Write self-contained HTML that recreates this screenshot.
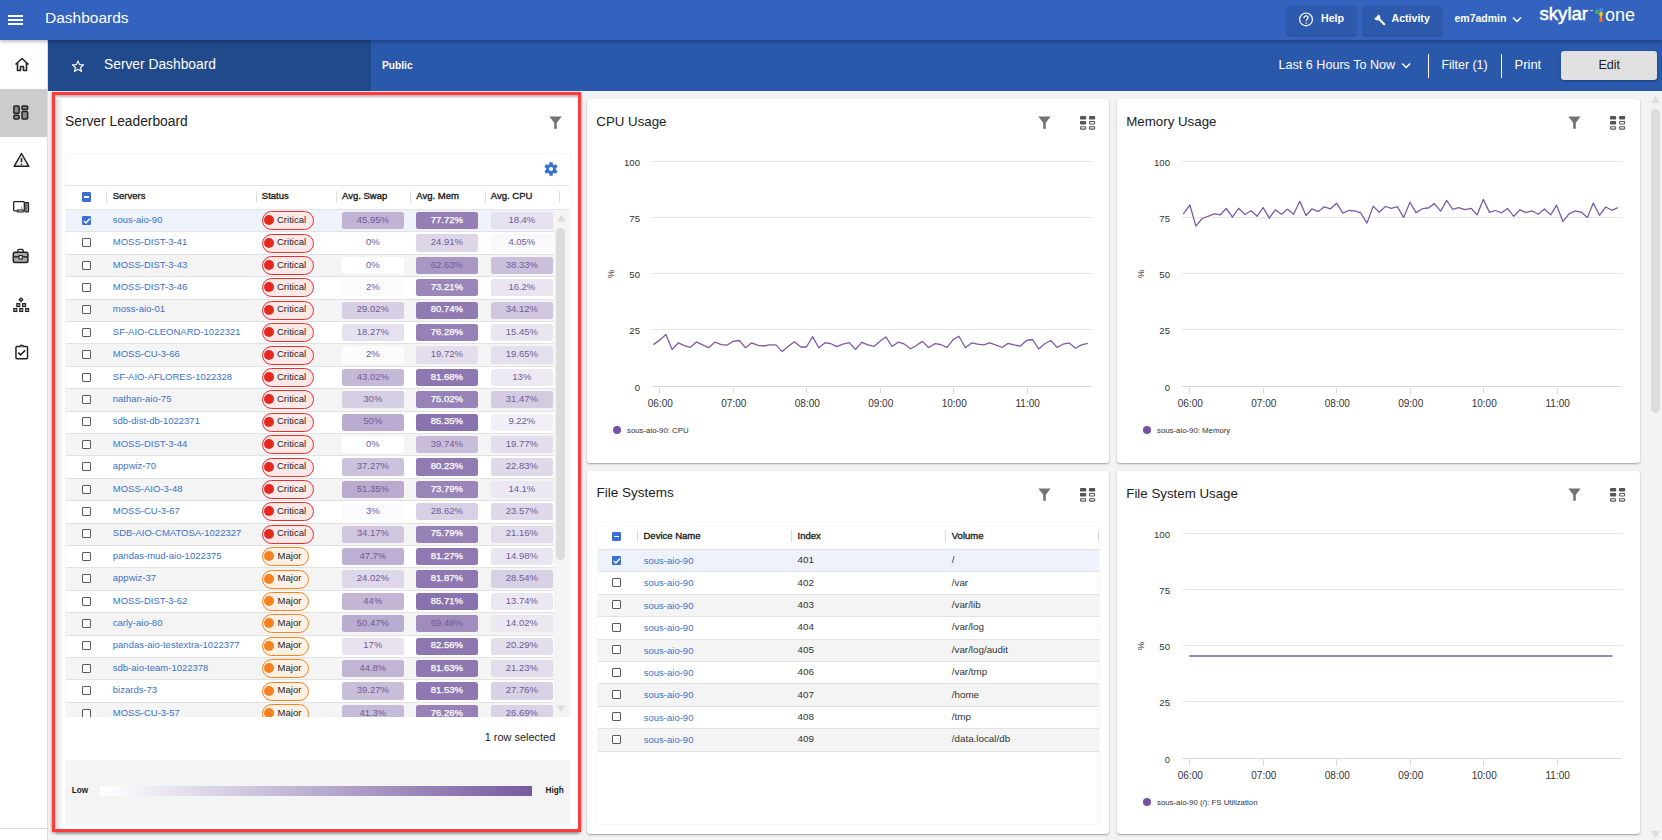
<!DOCTYPE html>
<html><head><meta charset="utf-8"><style>
*{box-sizing:content-box}
html,body{margin:0;padding:0}
body{width:1662px;height:840px;overflow:hidden;position:relative;background:#f3f3f3;font-family:"Liberation Sans", sans-serif;color:#222}
.a{position:absolute}
.t{position:absolute;white-space:nowrap;line-height:1}
.card{position:absolute;background:#fff;border-radius:3px;box-shadow:0 1px 2px rgba(0,0,0,0.35)}
</style></head><body>

<div class="a" style="left:0;top:0;width:1662px;height:40px;background:#3363be;z-index:5;box-shadow:0 1px 4px rgba(0,0,0,0.35)">
<div class="a" style="left:8px;top:14.5px;width:15px;height:2px;background:#fff"></div>
<div class="a" style="left:8px;top:18.8px;width:15px;height:2px;background:#fff"></div>
<div class="a" style="left:8px;top:23px;width:15px;height:2px;background:#fff"></div>
<div class="t" style="left:45px;top:9.78px;font-size:15.5px;color:#fff;">Dashboards</div>
<div class="a" style="left:1286.5px;top:5.5px;width:69px;height:29px;background:#2d5aad;border-radius:3px;box-shadow:0 1px 2px rgba(0,0,0,0.3)"></div>
<svg class="a" style="left:1298px;top:12px" width="16" height="16" viewBox="0 0 16 16"><circle cx="8" cy="7.4" r="6.4" fill="none" stroke="#fff" stroke-width="1.2"/><path d="M6 5.9 C6 4.6 7 3.9 8 3.9 C9.1 3.9 10 4.6 10 5.7 C10 7.1 8.2 7.2 8.2 9" fill="none" stroke="#fff" stroke-width="1.2"/><circle cx="8.2" cy="10.9" r="0.75" fill="#fff"/></svg>
<div class="t" style="left:1321px;top:13.23px;font-size:10.6px;color:#fff;font-weight:bold;">Help</div>
<div class="a" style="left:1363px;top:5.5px;width:78.5px;height:29px;background:#2d5aad;border-radius:3px;box-shadow:0 1px 2px rgba(0,0,0,0.3)"></div>
<svg class="a" style="left:1373.5px;top:14px" width="12" height="12" viewBox="0 0 12 12"><line x1="4" y1="4" x2="10.2" y2="10.2" stroke="#fff" stroke-width="2.2" stroke-linecap="round"/><circle cx="3.4" cy="3.4" r="2.9" fill="#fff"/><path d="M-0.5 2.6 L2.6 -0.5 L4.2 1.1 L1.1 4.2 Z" fill="#2d5aad"/></svg>
<div class="t" style="left:1391.5px;top:13.23px;font-size:10.6px;color:#fff;font-weight:bold;">Activity</div>
<div class="t" style="left:1454.5px;top:12.71px;font-size:10.5px;color:#fff;font-weight:bold;">em7admin</div>
<svg class="a" style="left:1512px;top:16px" width="10" height="8" viewBox="0 0 10 8"><path d="M1 1.5 L5 5.5 L9 1.5" fill="none" stroke="#fff" stroke-width="1.5"/></svg>
<div class="t" style="left:1539.5px;top:5.16px;font-size:18.6px;color:#fff;-webkit-text-stroke:0.5px #fff">skylar</div>
<div class="t" style="left:1605px;top:5.66px;font-size:18px;color:#fff;">one</div>
<div class="a" style="left:1590px;top:10.2px;width:3px;height:0.8px;background:#c9d3ea"></div>
<div class="a" style="left:1600.2px;top:10px;width:1.4px;height:10px;background:#d9a040"></div>
<div class="a" style="left:1594.8px;top:10.1px;width:4px;height:4px;border-radius:50%;background:#4cb944"></div>
<div class="a" style="left:1598.9px;top:7.7px;width:4px;height:4px;border-radius:50%;background:#3a8ef2"></div>
<div class="a" style="left:1598.9px;top:12.35px;width:4px;height:4px;border-radius:50%;background:#fbbf24"></div>
<div class="a" style="left:1598.9px;top:17.6px;width:4px;height:4px;border-radius:50%;background:#f47320"></div>
</div>
<div class="a" style="left:0;top:40px;width:47px;height:800px;background:#fff;border-right:1px solid #ddd;z-index:2"></div>
<div class="a" style="left:0;top:89px;width:47px;height:48px;background:#cccccc;z-index:3"></div>
<div class="a" style="left:0;top:828px;width:47px;height:1px;background:#ddd;z-index:3"></div>
<svg class="a" style="left:14px;top:57px;z-index:4" width="16" height="15" viewBox="0 0 16 15"><path d="M1.5 7.5 L8 1.5 L14.5 7.5 M3.5 5.8 V13.5 H6.5 V9.5 H9.5 V13.5 H12.5 V5.8" fill="none" stroke="#222" stroke-width="1.6" stroke-linejoin="round"/></svg>
<svg class="a" style="left:12.5px;top:104.5px;z-index:4" width="16" height="15" viewBox="0 0 16 15"><rect x="0.9" y="0.9" width="5.2" height="7.4" rx="0.8" fill="#8a8a8a" stroke="#222" stroke-width="1.5"/><rect x="9" y="0.9" width="5.6" height="3.6" rx="0.8" fill="#8a8a8a" stroke="#222" stroke-width="1.5"/><rect x="0.9" y="10.3" width="5.2" height="3.6" rx="0.8" fill="#8a8a8a" stroke="#222" stroke-width="1.5"/><rect x="9" y="6.5" width="5.6" height="7.4" rx="0.8" fill="#8a8a8a" stroke="#222" stroke-width="1.5"/></svg>
<svg class="a" style="left:13px;top:152px;z-index:4" width="17" height="16" viewBox="0 0 17 16"><path d="M8.5 1.5 L15.8 14.3 H1.2 Z" fill="#eee" stroke="#222" stroke-width="1.5" stroke-linejoin="round"/><path d="M8.5 6 V10.2" stroke="#222" stroke-width="1.5"/><circle cx="8.5" cy="12.2" r="0.8" fill="#222"/></svg>
<svg class="a" style="left:12px;top:200px;z-index:4" width="18" height="14" viewBox="0 0 18 14"><rect x="1.65" y="1.65" width="10.7" height="9.2" rx="1" fill="#fff" stroke="#222" stroke-width="1.3"/><rect x="12.8" y="2.6" width="3.8" height="9.3" rx="0.6" fill="#9a9a9a" stroke="#222" stroke-width="1.1"/><path d="M13.8 5 H15.6 M13.8 7 H15.6 M13.8 9 H15.6" stroke="#333" stroke-width="0.8"/><rect x="5.3" y="9.9" width="6" height="2.2" fill="#9a9a9a" stroke="#222" stroke-width="0.8"/><path d="M9.5 6.5 L10 9.5" stroke="#777" stroke-width="0.8"/></svg>
<svg class="a" style="left:12px;top:248px;z-index:4" width="18" height="16" viewBox="0 0 18 16"><path d="M5.8 4.3 V2.6 Q5.8 1.4 7 1.4 H10 Q11.2 1.4 11.2 2.6 V4.3" fill="none" stroke="#222" stroke-width="1.4"/><rect x="1.3" y="4.3" width="14.6" height="10.2" rx="1.6" fill="#a8a8a8" stroke="#222" stroke-width="1.5"/><path d="M1.3 8.8 H15.9" stroke="#222" stroke-width="1.4"/><rect x="7.1" y="7.6" width="3.2" height="3.4" fill="#fff" stroke="#222" stroke-width="1.1"/></svg>
<svg class="a" style="left:12px;top:296px;z-index:4" width="18" height="17" viewBox="0 0 18 17"><path d="M9 1.8 L10.9 3.7 L9 5.6 L7.1 3.7 Z" fill="#9a9a9a" stroke="#222" stroke-width="1.1"/><rect x="4.8" y="7.6" width="3" height="3" fill="#9a9a9a" stroke="#222" stroke-width="1.1"/><rect x="10.6" y="7.6" width="3" height="3" fill="#9a9a9a" stroke="#222" stroke-width="1.1"/><rect x="1.8" y="12.5" width="3" height="3" fill="#9a9a9a" stroke="#222" stroke-width="1.1"/><rect x="7.7" y="12.5" width="3" height="3" fill="#9a9a9a" stroke="#222" stroke-width="1.1"/><rect x="13.6" y="12.5" width="3" height="3" fill="#9a9a9a" stroke="#222" stroke-width="1.1"/></svg>
<svg class="a" style="left:14px;top:343px;z-index:4" width="16" height="17" viewBox="0 0 16 17"><rect x="1.95" y="3.4" width="11.6" height="12.3" rx="1.1" fill="#fff" stroke="#222" stroke-width="1.5"/><path d="M5.8 3.4 Q7.75 0.9 9.7 3.4" fill="#fff" stroke="#222" stroke-width="1.2"/><path d="M4.3 9.6 L6.6 11.9 L11.2 7.2" fill="none" stroke="#222" stroke-width="1.6"/></svg>
<div class="a" style="left:48px;top:40px;width:1614px;height:51px;background:#2a58ab;z-index:1"></div>
<div class="a" style="left:48px;top:40px;width:323px;height:51px;background:#214a8c;z-index:1"></div>
<svg class="a" style="left:71px;top:59.5px;z-index:2" width="14" height="13" viewBox="0 0 14 13"><path d="M7 0.9 L8.55 4.6 L12.6 4.9 L9.5 7.5 L10.5 11.5 L7 9.3 L3.5 11.5 L4.5 7.5 L1.4 4.9 L5.45 4.6 Z" fill="none" stroke="#fff" stroke-width="1.1" stroke-linejoin="round"/></svg>
<div class="t" style="left:104px;top:58.32px;font-size:13.8px;color:#fff;z-index:2;">Server Dashboard</div>
<div class="t" style="left:382px;top:61.27px;font-size:10.2px;color:#fff;font-weight:bold;z-index:2;">Public</div>
<div class="t" style="left:1278.5px;top:58.63px;font-size:12.6px;color:#fff;z-index:2;">Last 6 Hours To Now</div>
<svg class="a" style="left:1400.5px;top:61.5px;z-index:2" width="11" height="8" viewBox="0 0 11 8"><path d="M1.2 1.5 L5.2 5.5 L9.2 1.5" fill="none" stroke="#fff" stroke-width="1.5"/></svg>
<div class="a" style="left:1428px;top:54px;width:1px;height:24px;background:#fff;z-index:2"></div>
<div class="t" style="left:1441.5px;top:58.80px;font-size:12.4px;color:#fff;z-index:2;">Filter (1)</div>
<div class="a" style="left:1501px;top:54px;width:1px;height:24px;background:#fff;z-index:2"></div>
<div class="t" style="left:1514.5px;top:58.30px;font-size:13px;color:#fff;z-index:2;">Print</div>
<div class="a" style="left:1561px;top:51px;width:96px;height:29px;background:#e0e0e0;border-radius:3px;z-index:2;box-shadow:0 1px 2px rgba(0,0,0,0.3)"></div>
<div class="t" style="left:1598.5px;top:58.72px;font-size:12.5px;color:#222;z-index:3;">Edit</div>
<svg class="a" style="left:1650px;top:95px" width="11" height="9" viewBox="0 0 11 9"><path d="M5.5 1 L10 8 H1 Z" fill="#ddd"/></svg>
<div class="a" style="left:1651px;top:109px;width:9px;height:304px;background:#dcdcdc;border-radius:5px"></div>
<svg class="a" style="left:1650px;top:830px" width="11" height="9" viewBox="0 0 11 9"><path d="M1 1 H10 L5.5 8 Z" fill="#ddd"/></svg>
<div class="a" style="left:52px;top:92px;width:523px;height:734px;border:3px solid #ff3b3b;background:#fff;box-shadow:0 1px 3px rgba(0,0,0,0.4)"></div>
<div class="a" style="left:55px;top:97px;width:8px;height:732px;background:linear-gradient(to right,#cfd3d3,#e4e4e4 25%,#f1f1f1 60%,#fff)"></div>
<div class="a" style="left:55px;top:95px;width:523px;height:4px;background:linear-gradient(#b4b4b4,#cfcfcf 35%,#f4f4f4 80%,#fff)"></div>
<div class="a" style="left:56px;top:832px;width:522px;height:3px;background:linear-gradient(#9a9a9a,rgba(200,200,200,0.3))"></div>
<div class="t" style="left:65px;top:114.72px;font-size:13.8px;color:#222;">Server Leaderboard</div>
<div class="a" style="left:549px;top:116px"><svg width="14" height="14" viewBox="0 0 14 14"><path d="M0.3 0.4 H12.7 L7.8 6.8 V12.7 H5.2 V6.8 Z" fill="#737373"/></svg></div>
<div class="a" style="left:65px;top:153px;width:504px;height:564px;border:1px solid #f6f6f6;border-bottom:none;background:#fff"></div>
<svg class="a" style="left:543px;top:161px" width="16" height="16" viewBox="0 0 16 16"><g fill="#3470d0"><circle cx="8" cy="8" r="4.9"/><rect x="6.3" y="1.3" width="3.4" height="3.2" rx="0.5" transform="rotate(0 8 8)"/><rect x="6.3" y="1.3" width="3.4" height="3.2" rx="0.5" transform="rotate(60 8 8)"/><rect x="6.3" y="1.3" width="3.4" height="3.2" rx="0.5" transform="rotate(120 8 8)"/><rect x="6.3" y="1.3" width="3.4" height="3.2" rx="0.5" transform="rotate(180 8 8)"/><rect x="6.3" y="1.3" width="3.4" height="3.2" rx="0.5" transform="rotate(240 8 8)"/><rect x="6.3" y="1.3" width="3.4" height="3.2" rx="0.5" transform="rotate(300 8 8)"/></g><circle cx="8" cy="8" r="2.1" fill="#fff"/></svg>
<div class="a" style="left:66px;top:185px;width:503px;height:1px;background:#e4e4e4"></div>
<div style="position:absolute;left:81.7px;top:192.4px;width:9.5px;height:9.5px;background:#3b6fd4;border-radius:1.2px"><div style="position:absolute;left:2.3px;top:4.1px;width:5px;height:1.4px;background:#fff"></div></div>
<div class="a" style="left:105.5px;top:191px;width:1px;height:12px;background:#ddd"></div>
<div class="a" style="left:255.5px;top:191px;width:1px;height:12px;background:#ddd"></div>
<div class="a" style="left:335.5px;top:191px;width:1px;height:12px;background:#ddd"></div>
<div class="a" style="left:409.5px;top:191px;width:1px;height:12px;background:#ddd"></div>
<div class="a" style="left:484.5px;top:191px;width:1px;height:12px;background:#ddd"></div>
<div class="a" style="left:558.5px;top:191px;width:1px;height:12px;background:#ddd"></div>
<div class="t" style="left:112.7px;top:191.16px;font-size:9.5px;color:#222;-webkit-text-stroke:0.35px #222">Servers</div>
<div class="t" style="left:261.8px;top:191.16px;font-size:9.5px;color:#222;-webkit-text-stroke:0.35px #222">Status</div>
<div class="t" style="left:342px;top:191.16px;font-size:9.5px;color:#222;-webkit-text-stroke:0.35px #222">Avg. Swap</div>
<div class="t" style="left:416.3px;top:191.16px;font-size:9.5px;color:#222;-webkit-text-stroke:0.35px #222">Avg. Mem</div>
<div class="t" style="left:490.8px;top:191.16px;font-size:9.5px;color:#222;-webkit-text-stroke:0.35px #222">Avg. CPU</div>
<div class="a" style="left:66px;top:209px;width:503px;height:1px;background:#e2e2e2"></div>
<div class="a" style="left:66px;top:210px;width:503px;height:507px;overflow:hidden">
<div class="a" style="left:0;top:0.00px;width:488px;height:21.40px;background:#eef2fa;border-bottom:1px solid #e2e2e2"></div>
<div style="position:absolute;left:15.7px;top:5.7px;width:9.5px;height:9.5px;background:#3b6fd4;border-radius:1.2px"><svg width="10" height="10" viewBox="0 0 10 10" style="position:absolute;left:0;top:0"><path d="M1.8 5 L3.9 7 L8 2.6" stroke="#fff" stroke-width="1.4" fill="none"/></svg></div>
<div class="t" style="left:46.8px;top:4.76px;font-size:9.5px;color:#3a73c9;">sous-aio-90</div>
<div class="a" style="left:196px;top:1.10px;width:50px;height:17px;border:1px solid #e53030;border-radius:9.5px;background:#fde8e8"></div>
<div class="a" style="left:198.2px;top:5.20px;width:10px;height:10px;border-radius:50%;background:#e5281f"></div>
<div class="t" style="left:211px;top:4.76px;font-size:9.5px;color:#222;">Critical</div>
<div class="a" style="left:276px;top:1.90px;width:61.7px;height:17.4px;border-radius:2.5px;background:rgb(192,179,211)"></div>
<div class="t" style="left:276px;top:4.76px;width:61.7px;text-align:center;font-size:9.5px;color:#6f5b9b">45.95%</div>
<div class="a" style="left:350px;top:1.90px;width:61.7px;height:17.4px;border-radius:2.5px;background:rgb(149,127,181)"></div>
<div class="t" style="left:350px;top:4.76px;width:61.7px;text-align:center;font-size:9.5px;color:#fff;-webkit-text-stroke:0.25px #fff">77.72%</div>
<div class="a" style="left:425px;top:1.90px;width:61.7px;height:17.4px;border-radius:2.5px;background:rgb(230,225,238)"></div>
<div class="t" style="left:425px;top:4.76px;width:61.7px;text-align:center;font-size:9.5px;color:#6f5b9b">18.4%</div>
<div class="a" style="left:0;top:22.40px;width:488px;height:21.40px;background:#fff;border-bottom:1px solid #e2e2e2"></div>
<div style="position:absolute;left:15.7px;top:28.099999999999998px;width:7px;height:7px;border:1.3px solid #5a5a5a;border-radius:1px;background:#fff"></div>
<div class="t" style="left:46.8px;top:27.16px;font-size:9.5px;color:#3a73c9;">MOSS-DIST-3-41</div>
<div class="a" style="left:196px;top:23.50px;width:50px;height:17px;border:1px solid #e53030;border-radius:9.5px;background:#fde8e8"></div>
<div class="a" style="left:198.2px;top:27.60px;width:10px;height:10px;border-radius:50%;background:#e5281f"></div>
<div class="t" style="left:211px;top:27.16px;font-size:9.5px;color:#222;">Critical</div>
<div class="a" style="left:276px;top:24.30px;width:61.7px;height:17.4px;border-radius:2.5px;background:rgb(255,255,255)"></div>
<div class="t" style="left:276px;top:27.16px;width:61.7px;text-align:center;font-size:9.5px;color:#6f5b9b">0%</div>
<div class="a" style="left:350px;top:24.30px;width:61.7px;height:17.4px;border-radius:2.5px;background:rgb(221,214,231)"></div>
<div class="t" style="left:350px;top:27.16px;width:61.7px;text-align:center;font-size:9.5px;color:#6f5b9b">24.91%</div>
<div class="a" style="left:425px;top:24.30px;width:61.7px;height:17.4px;border-radius:2.5px;background:rgb(249,248,251)"></div>
<div class="t" style="left:425px;top:27.16px;width:61.7px;text-align:center;font-size:9.5px;color:#6f5b9b">4.05%</div>
<div class="a" style="left:0;top:44.80px;width:488px;height:21.40px;background:#f4f4f4;border-bottom:1px solid #e2e2e2"></div>
<div style="position:absolute;left:15.7px;top:50.5px;width:7px;height:7px;border:1.3px solid #5a5a5a;border-radius:1px;background:#fff"></div>
<div class="t" style="left:46.8px;top:49.56px;font-size:9.5px;color:#3a73c9;">MOSS-DIST-3-43</div>
<div class="a" style="left:196px;top:45.90px;width:50px;height:17px;border:1px solid #e53030;border-radius:9.5px;background:#fde8e8"></div>
<div class="a" style="left:198.2px;top:50.00px;width:10px;height:10px;border-radius:50%;background:#e5281f"></div>
<div class="t" style="left:211px;top:49.56px;font-size:9.5px;color:#222;">Critical</div>
<div class="a" style="left:276px;top:46.70px;width:61.7px;height:17.4px;border-radius:2.5px;background:rgb(255,255,255)"></div>
<div class="t" style="left:276px;top:49.56px;width:61.7px;text-align:center;font-size:9.5px;color:#6f5b9b">0%</div>
<div class="a" style="left:350px;top:46.70px;width:61.7px;height:17.4px;border-radius:2.5px;background:rgb(169,152,196)"></div>
<div class="t" style="left:350px;top:49.56px;width:61.7px;text-align:center;font-size:9.5px;color:#6f5b9b">62.63%</div>
<div class="a" style="left:425px;top:46.70px;width:61.7px;height:17.4px;border-radius:2.5px;background:rgb(202,192,219)"></div>
<div class="t" style="left:425px;top:49.56px;width:61.7px;text-align:center;font-size:9.5px;color:#6f5b9b">38.33%</div>
<div class="a" style="left:0;top:67.20px;width:488px;height:21.40px;background:#fff;border-bottom:1px solid #e2e2e2"></div>
<div style="position:absolute;left:15.7px;top:72.89999999999999px;width:7px;height:7px;border:1.3px solid #5a5a5a;border-radius:1px;background:#fff"></div>
<div class="t" style="left:46.8px;top:71.96px;font-size:9.5px;color:#3a73c9;">MOSS-DIST-3-46</div>
<div class="a" style="left:196px;top:68.30px;width:50px;height:17px;border:1px solid #e53030;border-radius:9.5px;background:#fde8e8"></div>
<div class="a" style="left:198.2px;top:72.40px;width:10px;height:10px;border-radius:50%;background:#e5281f"></div>
<div class="t" style="left:211px;top:71.96px;font-size:9.5px;color:#222;">Critical</div>
<div class="a" style="left:276px;top:69.10px;width:61.7px;height:17.4px;border-radius:2.5px;background:rgb(252,252,253)"></div>
<div class="t" style="left:276px;top:71.96px;width:61.7px;text-align:center;font-size:9.5px;color:#6f5b9b">2%</div>
<div class="a" style="left:350px;top:69.10px;width:61.7px;height:17.4px;border-radius:2.5px;background:rgb(155,134,185)"></div>
<div class="t" style="left:350px;top:71.96px;width:61.7px;text-align:center;font-size:9.5px;color:#fff;-webkit-text-stroke:0.25px #fff">73.21%</div>
<div class="a" style="left:425px;top:69.10px;width:61.7px;height:17.4px;border-radius:2.5px;background:rgb(233,228,240)"></div>
<div class="t" style="left:425px;top:71.96px;width:61.7px;text-align:center;font-size:9.5px;color:#6f5b9b">16.2%</div>
<div class="a" style="left:0;top:89.60px;width:488px;height:21.40px;background:#f4f4f4;border-bottom:1px solid #e2e2e2"></div>
<div style="position:absolute;left:15.7px;top:95.3px;width:7px;height:7px;border:1.3px solid #5a5a5a;border-radius:1px;background:#fff"></div>
<div class="t" style="left:46.8px;top:94.36px;font-size:9.5px;color:#3a73c9;">moss-aio-01</div>
<div class="a" style="left:196px;top:90.70px;width:50px;height:17px;border:1px solid #e53030;border-radius:9.5px;background:#fde8e8"></div>
<div class="a" style="left:198.2px;top:94.80px;width:10px;height:10px;border-radius:50%;background:#e5281f"></div>
<div class="t" style="left:211px;top:94.36px;font-size:9.5px;color:#222;">Critical</div>
<div class="a" style="left:276px;top:91.50px;width:61.7px;height:17.4px;border-radius:2.5px;background:rgb(215,207,227)"></div>
<div class="t" style="left:276px;top:94.36px;width:61.7px;text-align:center;font-size:9.5px;color:#6f5b9b">29.02%</div>
<div class="a" style="left:350px;top:91.50px;width:61.7px;height:17.4px;border-radius:2.5px;background:rgb(144,122,178)"></div>
<div class="t" style="left:350px;top:94.36px;width:61.7px;text-align:center;font-size:9.5px;color:#fff;-webkit-text-stroke:0.25px #fff">80.74%</div>
<div class="a" style="left:425px;top:91.50px;width:61.7px;height:17.4px;border-radius:2.5px;background:rgb(208,199,223)"></div>
<div class="t" style="left:425px;top:94.36px;width:61.7px;text-align:center;font-size:9.5px;color:#6f5b9b">34.12%</div>
<div class="a" style="left:0;top:112.00px;width:488px;height:21.40px;background:#fff;border-bottom:1px solid #e2e2e2"></div>
<div style="position:absolute;left:15.7px;top:117.7px;width:7px;height:7px;border:1.3px solid #5a5a5a;border-radius:1px;background:#fff"></div>
<div class="t" style="left:46.8px;top:116.76px;font-size:9.5px;color:#3a73c9;">SF-AIO-CLEONARD-1022321</div>
<div class="a" style="left:196px;top:113.10px;width:50px;height:17px;border:1px solid #e53030;border-radius:9.5px;background:#fde8e8"></div>
<div class="a" style="left:198.2px;top:117.20px;width:10px;height:10px;border-radius:50%;background:#e5281f"></div>
<div class="t" style="left:211px;top:116.76px;font-size:9.5px;color:#222;">Critical</div>
<div class="a" style="left:276px;top:113.90px;width:61.7px;height:17.4px;border-radius:2.5px;background:rgb(230,225,238)"></div>
<div class="t" style="left:276px;top:116.76px;width:61.7px;text-align:center;font-size:9.5px;color:#6f5b9b">18.27%</div>
<div class="a" style="left:350px;top:113.90px;width:61.7px;height:17.4px;border-radius:2.5px;background:rgb(150,129,183)"></div>
<div class="t" style="left:350px;top:116.76px;width:61.7px;text-align:center;font-size:9.5px;color:#fff;-webkit-text-stroke:0.25px #fff">76.28%</div>
<div class="a" style="left:425px;top:113.90px;width:61.7px;height:17.4px;border-radius:2.5px;background:rgb(234,230,240)"></div>
<div class="t" style="left:425px;top:116.76px;width:61.7px;text-align:center;font-size:9.5px;color:#6f5b9b">15.45%</div>
<div class="a" style="left:0;top:134.40px;width:488px;height:21.40px;background:#f4f4f4;border-bottom:1px solid #e2e2e2"></div>
<div style="position:absolute;left:15.7px;top:140.09999999999997px;width:7px;height:7px;border:1.3px solid #5a5a5a;border-radius:1px;background:#fff"></div>
<div class="t" style="left:46.8px;top:139.16px;font-size:9.5px;color:#3a73c9;">MOSS-CU-3-66</div>
<div class="a" style="left:196px;top:135.50px;width:50px;height:17px;border:1px solid #e53030;border-radius:9.5px;background:#fde8e8"></div>
<div class="a" style="left:198.2px;top:139.60px;width:10px;height:10px;border-radius:50%;background:#e5281f"></div>
<div class="t" style="left:211px;top:139.16px;font-size:9.5px;color:#222;">Critical</div>
<div class="a" style="left:276px;top:136.30px;width:61.7px;height:17.4px;border-radius:2.5px;background:rgb(252,252,253)"></div>
<div class="t" style="left:276px;top:139.16px;width:61.7px;text-align:center;font-size:9.5px;color:#6f5b9b">2%</div>
<div class="a" style="left:350px;top:136.30px;width:61.7px;height:17.4px;border-radius:2.5px;background:rgb(228,222,236)"></div>
<div class="t" style="left:350px;top:139.16px;width:61.7px;text-align:center;font-size:9.5px;color:#6f5b9b">19.72%</div>
<div class="a" style="left:425px;top:136.30px;width:61.7px;height:17.4px;border-radius:2.5px;background:rgb(228,223,236)"></div>
<div class="t" style="left:425px;top:139.16px;width:61.7px;text-align:center;font-size:9.5px;color:#6f5b9b">19.65%</div>
<div class="a" style="left:0;top:156.80px;width:488px;height:21.40px;background:#fff;border-bottom:1px solid #e2e2e2"></div>
<div style="position:absolute;left:15.7px;top:162.49999999999997px;width:7px;height:7px;border:1.3px solid #5a5a5a;border-radius:1px;background:#fff"></div>
<div class="t" style="left:46.8px;top:161.56px;font-size:9.5px;color:#3a73c9;">SF-AIO-AFLORES-1022328</div>
<div class="a" style="left:196px;top:157.90px;width:50px;height:17px;border:1px solid #e53030;border-radius:9.5px;background:#fde8e8"></div>
<div class="a" style="left:198.2px;top:162.00px;width:10px;height:10px;border-radius:50%;background:#e5281f"></div>
<div class="t" style="left:211px;top:161.56px;font-size:9.5px;color:#222;">Critical</div>
<div class="a" style="left:276px;top:158.70px;width:61.7px;height:17.4px;border-radius:2.5px;background:rgb(196,184,214)"></div>
<div class="t" style="left:276px;top:161.56px;width:61.7px;text-align:center;font-size:9.5px;color:#6f5b9b">43.02%</div>
<div class="a" style="left:350px;top:158.70px;width:61.7px;height:17.4px;border-radius:2.5px;background:rgb(143,120,177)"></div>
<div class="t" style="left:350px;top:161.56px;width:61.7px;text-align:center;font-size:9.5px;color:#fff;-webkit-text-stroke:0.25px #fff">81.68%</div>
<div class="a" style="left:425px;top:158.70px;width:61.7px;height:17.4px;border-radius:2.5px;background:rgb(237,234,243)"></div>
<div class="t" style="left:425px;top:161.56px;width:61.7px;text-align:center;font-size:9.5px;color:#6f5b9b">13%</div>
<div class="a" style="left:0;top:179.20px;width:488px;height:21.40px;background:#f4f4f4;border-bottom:1px solid #e2e2e2"></div>
<div style="position:absolute;left:15.7px;top:184.89999999999998px;width:7px;height:7px;border:1.3px solid #5a5a5a;border-radius:1px;background:#fff"></div>
<div class="t" style="left:46.8px;top:183.96px;font-size:9.5px;color:#3a73c9;">nathan-aio-75</div>
<div class="a" style="left:196px;top:180.30px;width:50px;height:17px;border:1px solid #e53030;border-radius:9.5px;background:#fde8e8"></div>
<div class="a" style="left:198.2px;top:184.40px;width:10px;height:10px;border-radius:50%;background:#e5281f"></div>
<div class="t" style="left:211px;top:183.96px;font-size:9.5px;color:#222;">Critical</div>
<div class="a" style="left:276px;top:181.10px;width:61.7px;height:17.4px;border-radius:2.5px;background:rgb(214,206,226)"></div>
<div class="t" style="left:276px;top:183.96px;width:61.7px;text-align:center;font-size:9.5px;color:#6f5b9b">30%</div>
<div class="a" style="left:350px;top:181.10px;width:61.7px;height:17.4px;border-radius:2.5px;background:rgb(152,131,184)"></div>
<div class="t" style="left:350px;top:183.96px;width:61.7px;text-align:center;font-size:9.5px;color:#fff;-webkit-text-stroke:0.25px #fff">75.02%</div>
<div class="a" style="left:425px;top:181.10px;width:61.7px;height:17.4px;border-radius:2.5px;background:rgb(212,203,225)"></div>
<div class="t" style="left:425px;top:183.96px;width:61.7px;text-align:center;font-size:9.5px;color:#6f5b9b">31.47%</div>
<div class="a" style="left:0;top:201.60px;width:488px;height:21.40px;background:#fff;border-bottom:1px solid #e2e2e2"></div>
<div style="position:absolute;left:15.7px;top:207.29999999999998px;width:7px;height:7px;border:1.3px solid #5a5a5a;border-radius:1px;background:#fff"></div>
<div class="t" style="left:46.8px;top:206.36px;font-size:9.5px;color:#3a73c9;">sdb-dist-db-1022371</div>
<div class="a" style="left:196px;top:202.70px;width:50px;height:17px;border:1px solid #e53030;border-radius:9.5px;background:#fde8e8"></div>
<div class="a" style="left:198.2px;top:206.80px;width:10px;height:10px;border-radius:50%;background:#e5281f"></div>
<div class="t" style="left:211px;top:206.36px;font-size:9.5px;color:#222;">Critical</div>
<div class="a" style="left:276px;top:203.50px;width:61.7px;height:17.4px;border-radius:2.5px;background:rgb(186,172,208)"></div>
<div class="t" style="left:276px;top:206.36px;width:61.7px;text-align:center;font-size:9.5px;color:#6f5b9b">50%</div>
<div class="a" style="left:350px;top:203.50px;width:61.7px;height:17.4px;border-radius:2.5px;background:rgb(138,114,174)"></div>
<div class="t" style="left:350px;top:206.36px;width:61.7px;text-align:center;font-size:9.5px;color:#fff;-webkit-text-stroke:0.25px #fff">85.35%</div>
<div class="a" style="left:425px;top:203.50px;width:61.7px;height:17.4px;border-radius:2.5px;background:rgb(242,240,246)"></div>
<div class="t" style="left:425px;top:206.36px;width:61.7px;text-align:center;font-size:9.5px;color:#6f5b9b">9.22%</div>
<div class="a" style="left:0;top:224.00px;width:488px;height:21.40px;background:#f4f4f4;border-bottom:1px solid #e2e2e2"></div>
<div style="position:absolute;left:15.7px;top:229.7px;width:7px;height:7px;border:1.3px solid #5a5a5a;border-radius:1px;background:#fff"></div>
<div class="t" style="left:46.8px;top:228.76px;font-size:9.5px;color:#3a73c9;">MOSS-DIST-3-44</div>
<div class="a" style="left:196px;top:225.10px;width:50px;height:17px;border:1px solid #e53030;border-radius:9.5px;background:#fde8e8"></div>
<div class="a" style="left:198.2px;top:229.20px;width:10px;height:10px;border-radius:50%;background:#e5281f"></div>
<div class="t" style="left:211px;top:228.76px;font-size:9.5px;color:#222;">Critical</div>
<div class="a" style="left:276px;top:225.90px;width:61.7px;height:17.4px;border-radius:2.5px;background:rgb(255,255,255)"></div>
<div class="t" style="left:276px;top:228.76px;width:61.7px;text-align:center;font-size:9.5px;color:#6f5b9b">0%</div>
<div class="a" style="left:350px;top:225.90px;width:61.7px;height:17.4px;border-radius:2.5px;background:rgb(201,189,217)"></div>
<div class="t" style="left:350px;top:228.76px;width:61.7px;text-align:center;font-size:9.5px;color:#6f5b9b">39.74%</div>
<div class="a" style="left:425px;top:225.90px;width:61.7px;height:17.4px;border-radius:2.5px;background:rgb(228,222,236)"></div>
<div class="t" style="left:425px;top:228.76px;width:61.7px;text-align:center;font-size:9.5px;color:#6f5b9b">19.77%</div>
<div class="a" style="left:0;top:246.40px;width:488px;height:21.40px;background:#fff;border-bottom:1px solid #e2e2e2"></div>
<div style="position:absolute;left:15.7px;top:252.09999999999997px;width:7px;height:7px;border:1.3px solid #5a5a5a;border-radius:1px;background:#fff"></div>
<div class="t" style="left:46.8px;top:251.16px;font-size:9.5px;color:#3a73c9;">appwiz-70</div>
<div class="a" style="left:196px;top:247.50px;width:50px;height:17px;border:1px solid #e53030;border-radius:9.5px;background:#fde8e8"></div>
<div class="a" style="left:198.2px;top:251.60px;width:10px;height:10px;border-radius:50%;background:#e5281f"></div>
<div class="t" style="left:211px;top:251.16px;font-size:9.5px;color:#222;">Critical</div>
<div class="a" style="left:276px;top:248.30px;width:61.7px;height:17.4px;border-radius:2.5px;background:rgb(204,194,220)"></div>
<div class="t" style="left:276px;top:251.16px;width:61.7px;text-align:center;font-size:9.5px;color:#6f5b9b">37.27%</div>
<div class="a" style="left:350px;top:248.30px;width:61.7px;height:17.4px;border-radius:2.5px;background:rgb(145,123,179)"></div>
<div class="t" style="left:350px;top:251.16px;width:61.7px;text-align:center;font-size:9.5px;color:#fff;-webkit-text-stroke:0.25px #fff">80.23%</div>
<div class="a" style="left:425px;top:248.30px;width:61.7px;height:17.4px;border-radius:2.5px;background:rgb(224,217,233)"></div>
<div class="t" style="left:425px;top:251.16px;width:61.7px;text-align:center;font-size:9.5px;color:#6f5b9b">22.83%</div>
<div class="a" style="left:0;top:268.80px;width:488px;height:21.40px;background:#f4f4f4;border-bottom:1px solid #e2e2e2"></div>
<div style="position:absolute;left:15.7px;top:274.49999999999994px;width:7px;height:7px;border:1.3px solid #5a5a5a;border-radius:1px;background:#fff"></div>
<div class="t" style="left:46.8px;top:273.56px;font-size:9.5px;color:#3a73c9;">MOSS-AIO-3-48</div>
<div class="a" style="left:196px;top:269.90px;width:50px;height:17px;border:1px solid #e53030;border-radius:9.5px;background:#fde8e8"></div>
<div class="a" style="left:198.2px;top:274.00px;width:10px;height:10px;border-radius:50%;background:#e5281f"></div>
<div class="t" style="left:211px;top:273.56px;font-size:9.5px;color:#222;">Critical</div>
<div class="a" style="left:276px;top:270.70px;width:61.7px;height:17.4px;border-radius:2.5px;background:rgb(185,170,206)"></div>
<div class="t" style="left:276px;top:273.56px;width:61.7px;text-align:center;font-size:9.5px;color:#6f5b9b">51.35%</div>
<div class="a" style="left:350px;top:270.70px;width:61.7px;height:17.4px;border-radius:2.5px;background:rgb(154,133,185)"></div>
<div class="t" style="left:350px;top:273.56px;width:61.7px;text-align:center;font-size:9.5px;color:#fff;-webkit-text-stroke:0.25px #fff">73.79%</div>
<div class="a" style="left:425px;top:270.70px;width:61.7px;height:17.4px;border-radius:2.5px;background:rgb(236,232,242)"></div>
<div class="t" style="left:425px;top:273.56px;width:61.7px;text-align:center;font-size:9.5px;color:#6f5b9b">14.1%</div>
<div class="a" style="left:0;top:291.20px;width:488px;height:21.40px;background:#fff;border-bottom:1px solid #e2e2e2"></div>
<div style="position:absolute;left:15.7px;top:296.9px;width:7px;height:7px;border:1.3px solid #5a5a5a;border-radius:1px;background:#fff"></div>
<div class="t" style="left:46.8px;top:295.96px;font-size:9.5px;color:#3a73c9;">MOSS-CU-3-67</div>
<div class="a" style="left:196px;top:292.30px;width:50px;height:17px;border:1px solid #e53030;border-radius:9.5px;background:#fde8e8"></div>
<div class="a" style="left:198.2px;top:296.40px;width:10px;height:10px;border-radius:50%;background:#e5281f"></div>
<div class="t" style="left:211px;top:295.96px;font-size:9.5px;color:#222;">Critical</div>
<div class="a" style="left:276px;top:293.10px;width:61.7px;height:17.4px;border-radius:2.5px;background:rgb(251,250,252)"></div>
<div class="t" style="left:276px;top:295.96px;width:61.7px;text-align:center;font-size:9.5px;color:#6f5b9b">3%</div>
<div class="a" style="left:350px;top:293.10px;width:61.7px;height:17.4px;border-radius:2.5px;background:rgb(216,208,228)"></div>
<div class="t" style="left:350px;top:295.96px;width:61.7px;text-align:center;font-size:9.5px;color:#6f5b9b">28.62%</div>
<div class="a" style="left:425px;top:293.10px;width:61.7px;height:17.4px;border-radius:2.5px;background:rgb(223,216,233)"></div>
<div class="t" style="left:425px;top:295.96px;width:61.7px;text-align:center;font-size:9.5px;color:#6f5b9b">23.57%</div>
<div class="a" style="left:0;top:313.60px;width:488px;height:21.40px;background:#f4f4f4;border-bottom:1px solid #e2e2e2"></div>
<div style="position:absolute;left:15.7px;top:319.29999999999995px;width:7px;height:7px;border:1.3px solid #5a5a5a;border-radius:1px;background:#fff"></div>
<div class="t" style="left:46.8px;top:318.36px;font-size:9.5px;color:#3a73c9;">SDB-AIO-CMATOSA-1022327</div>
<div class="a" style="left:196px;top:314.70px;width:50px;height:17px;border:1px solid #e53030;border-radius:9.5px;background:#fde8e8"></div>
<div class="a" style="left:198.2px;top:318.80px;width:10px;height:10px;border-radius:50%;background:#e5281f"></div>
<div class="t" style="left:211px;top:318.36px;font-size:9.5px;color:#222;">Critical</div>
<div class="a" style="left:276px;top:315.50px;width:61.7px;height:17.4px;border-radius:2.5px;background:rgb(208,199,223)"></div>
<div class="t" style="left:276px;top:318.36px;width:61.7px;text-align:center;font-size:9.5px;color:#6f5b9b">34.17%</div>
<div class="a" style="left:350px;top:315.50px;width:61.7px;height:17.4px;border-radius:2.5px;background:rgb(151,130,183)"></div>
<div class="t" style="left:350px;top:318.36px;width:61.7px;text-align:center;font-size:9.5px;color:#fff;-webkit-text-stroke:0.25px #fff">75.79%</div>
<div class="a" style="left:425px;top:315.50px;width:61.7px;height:17.4px;border-radius:2.5px;background:rgb(226,220,235)"></div>
<div class="t" style="left:425px;top:318.36px;width:61.7px;text-align:center;font-size:9.5px;color:#6f5b9b">21.16%</div>
<div class="a" style="left:0;top:336.00px;width:488px;height:21.40px;background:#fff;border-bottom:1px solid #e2e2e2"></div>
<div style="position:absolute;left:15.7px;top:341.7px;width:7px;height:7px;border:1.3px solid #5a5a5a;border-radius:1px;background:#fff"></div>
<div class="t" style="left:46.8px;top:340.76px;font-size:9.5px;color:#3a73c9;">pandas-mud-aio-1022375</div>
<div class="a" style="left:196px;top:337.10px;width:45px;height:17px;border:1px solid #f5841f;border-radius:9.5px;background:#fdf1e6"></div>
<div class="a" style="left:198.2px;top:341.20px;width:10px;height:10px;border-radius:50%;background:#f5821f"></div>
<div class="t" style="left:211.6px;top:340.76px;font-size:9.5px;color:#222;">Major</div>
<div class="a" style="left:276px;top:337.90px;width:61.7px;height:17.4px;border-radius:2.5px;background:rgb(190,176,210)"></div>
<div class="t" style="left:276px;top:340.76px;width:61.7px;text-align:center;font-size:9.5px;color:#6f5b9b">47.7%</div>
<div class="a" style="left:350px;top:337.90px;width:61.7px;height:17.4px;border-radius:2.5px;background:rgb(144,121,178)"></div>
<div class="t" style="left:350px;top:340.76px;width:61.7px;text-align:center;font-size:9.5px;color:#fff;-webkit-text-stroke:0.25px #fff">81.27%</div>
<div class="a" style="left:425px;top:337.90px;width:61.7px;height:17.4px;border-radius:2.5px;background:rgb(234,230,241)"></div>
<div class="t" style="left:425px;top:340.76px;width:61.7px;text-align:center;font-size:9.5px;color:#6f5b9b">14.98%</div>
<div class="a" style="left:0;top:358.40px;width:488px;height:21.40px;background:#f4f4f4;border-bottom:1px solid #e2e2e2"></div>
<div style="position:absolute;left:15.7px;top:364.09999999999997px;width:7px;height:7px;border:1.3px solid #5a5a5a;border-radius:1px;background:#fff"></div>
<div class="t" style="left:46.8px;top:363.16px;font-size:9.5px;color:#3a73c9;">appwiz-37</div>
<div class="a" style="left:196px;top:359.50px;width:45px;height:17px;border:1px solid #f5841f;border-radius:9.5px;background:#fdf1e6"></div>
<div class="a" style="left:198.2px;top:363.60px;width:10px;height:10px;border-radius:50%;background:#f5821f"></div>
<div class="t" style="left:211.6px;top:363.16px;font-size:9.5px;color:#222;">Major</div>
<div class="a" style="left:276px;top:360.30px;width:61.7px;height:17.4px;border-radius:2.5px;background:rgb(222,215,232)"></div>
<div class="t" style="left:276px;top:363.16px;width:61.7px;text-align:center;font-size:9.5px;color:#6f5b9b">24.02%</div>
<div class="a" style="left:350px;top:360.30px;width:61.7px;height:17.4px;border-radius:2.5px;background:rgb(143,120,177)"></div>
<div class="t" style="left:350px;top:363.16px;width:61.7px;text-align:center;font-size:9.5px;color:#fff;-webkit-text-stroke:0.25px #fff">81.87%</div>
<div class="a" style="left:425px;top:360.30px;width:61.7px;height:17.4px;border-radius:2.5px;background:rgb(216,208,228)"></div>
<div class="t" style="left:425px;top:363.16px;width:61.7px;text-align:center;font-size:9.5px;color:#6f5b9b">28.54%</div>
<div class="a" style="left:0;top:380.80px;width:488px;height:21.40px;background:#fff;border-bottom:1px solid #e2e2e2"></div>
<div style="position:absolute;left:15.7px;top:386.49999999999994px;width:7px;height:7px;border:1.3px solid #5a5a5a;border-radius:1px;background:#fff"></div>
<div class="t" style="left:46.8px;top:385.56px;font-size:9.5px;color:#3a73c9;">MOSS-DIST-3-62</div>
<div class="a" style="left:196px;top:381.90px;width:45px;height:17px;border:1px solid #f5841f;border-radius:9.5px;background:#fdf1e6"></div>
<div class="a" style="left:198.2px;top:386.00px;width:10px;height:10px;border-radius:50%;background:#f5821f"></div>
<div class="t" style="left:211.6px;top:385.56px;font-size:9.5px;color:#222;">Major</div>
<div class="a" style="left:276px;top:382.70px;width:61.7px;height:17.4px;border-radius:2.5px;background:rgb(195,182,213)"></div>
<div class="t" style="left:276px;top:385.56px;width:61.7px;text-align:center;font-size:9.5px;color:#6f5b9b">44%</div>
<div class="a" style="left:350px;top:382.70px;width:61.7px;height:17.4px;border-radius:2.5px;background:rgb(138,114,174)"></div>
<div class="t" style="left:350px;top:385.56px;width:61.7px;text-align:center;font-size:9.5px;color:#fff;-webkit-text-stroke:0.25px #fff">85.71%</div>
<div class="a" style="left:425px;top:382.70px;width:61.7px;height:17.4px;border-radius:2.5px;background:rgb(236,232,242)"></div>
<div class="t" style="left:425px;top:385.56px;width:61.7px;text-align:center;font-size:9.5px;color:#6f5b9b">13.74%</div>
<div class="a" style="left:0;top:403.20px;width:488px;height:21.40px;background:#f4f4f4;border-bottom:1px solid #e2e2e2"></div>
<div style="position:absolute;left:15.7px;top:408.9px;width:7px;height:7px;border:1.3px solid #5a5a5a;border-radius:1px;background:#fff"></div>
<div class="t" style="left:46.8px;top:407.96px;font-size:9.5px;color:#3a73c9;">carly-aio-80</div>
<div class="a" style="left:196px;top:404.30px;width:45px;height:17px;border:1px solid #f5841f;border-radius:9.5px;background:#fdf1e6"></div>
<div class="a" style="left:198.2px;top:408.40px;width:10px;height:10px;border-radius:50%;background:#f5821f"></div>
<div class="t" style="left:211.6px;top:407.96px;font-size:9.5px;color:#222;">Major</div>
<div class="a" style="left:276px;top:405.10px;width:61.7px;height:17.4px;border-radius:2.5px;background:rgb(186,172,207)"></div>
<div class="t" style="left:276px;top:407.96px;width:61.7px;text-align:center;font-size:9.5px;color:#6f5b9b">50.47%</div>
<div class="a" style="left:350px;top:405.10px;width:61.7px;height:17.4px;border-radius:2.5px;background:rgb(160,140,189)"></div>
<div class="t" style="left:350px;top:407.96px;width:61.7px;text-align:center;font-size:9.5px;color:#6f5b9b">69.48%</div>
<div class="a" style="left:425px;top:405.10px;width:61.7px;height:17.4px;border-radius:2.5px;background:rgb(236,232,242)"></div>
<div class="t" style="left:425px;top:407.96px;width:61.7px;text-align:center;font-size:9.5px;color:#6f5b9b">14.02%</div>
<div class="a" style="left:0;top:425.60px;width:488px;height:21.40px;background:#fff;border-bottom:1px solid #e2e2e2"></div>
<div style="position:absolute;left:15.7px;top:431.29999999999995px;width:7px;height:7px;border:1.3px solid #5a5a5a;border-radius:1px;background:#fff"></div>
<div class="t" style="left:46.8px;top:430.36px;font-size:9.5px;color:#3a73c9;">pandas-aio-testextra-1022377</div>
<div class="a" style="left:196px;top:426.70px;width:45px;height:17px;border:1px solid #f5841f;border-radius:9.5px;background:#fdf1e6"></div>
<div class="a" style="left:198.2px;top:430.80px;width:10px;height:10px;border-radius:50%;background:#f5821f"></div>
<div class="t" style="left:211.6px;top:430.36px;font-size:9.5px;color:#222;">Major</div>
<div class="a" style="left:276px;top:427.50px;width:61.7px;height:17.4px;border-radius:2.5px;background:rgb(232,227,239)"></div>
<div class="t" style="left:276px;top:430.36px;width:61.7px;text-align:center;font-size:9.5px;color:#6f5b9b">17%</div>
<div class="a" style="left:350px;top:427.50px;width:61.7px;height:17.4px;border-radius:2.5px;background:rgb(142,119,177)"></div>
<div class="t" style="left:350px;top:430.36px;width:61.7px;text-align:center;font-size:9.5px;color:#fff;-webkit-text-stroke:0.25px #fff">82.56%</div>
<div class="a" style="left:425px;top:427.50px;width:61.7px;height:17.4px;border-radius:2.5px;background:rgb(227,222,236)"></div>
<div class="t" style="left:425px;top:430.36px;width:61.7px;text-align:center;font-size:9.5px;color:#6f5b9b">20.29%</div>
<div class="a" style="left:0;top:448.00px;width:488px;height:21.40px;background:#f4f4f4;border-bottom:1px solid #e2e2e2"></div>
<div style="position:absolute;left:15.7px;top:453.7px;width:7px;height:7px;border:1.3px solid #5a5a5a;border-radius:1px;background:#fff"></div>
<div class="t" style="left:46.8px;top:452.76px;font-size:9.5px;color:#3a73c9;">sdb-aio-team-1022378</div>
<div class="a" style="left:196px;top:449.10px;width:45px;height:17px;border:1px solid #f5841f;border-radius:9.5px;background:#fdf1e6"></div>
<div class="a" style="left:198.2px;top:453.20px;width:10px;height:10px;border-radius:50%;background:#f5821f"></div>
<div class="t" style="left:211.6px;top:452.76px;font-size:9.5px;color:#222;">Major</div>
<div class="a" style="left:276px;top:449.90px;width:61.7px;height:17.4px;border-radius:2.5px;background:rgb(194,181,212)"></div>
<div class="t" style="left:276px;top:452.76px;width:61.7px;text-align:center;font-size:9.5px;color:#6f5b9b">44.8%</div>
<div class="a" style="left:350px;top:449.90px;width:61.7px;height:17.4px;border-radius:2.5px;background:rgb(143,120,177)"></div>
<div class="t" style="left:350px;top:452.76px;width:61.7px;text-align:center;font-size:9.5px;color:#fff;-webkit-text-stroke:0.25px #fff">81.63%</div>
<div class="a" style="left:425px;top:449.90px;width:61.7px;height:17.4px;border-radius:2.5px;background:rgb(226,220,235)"></div>
<div class="t" style="left:425px;top:452.76px;width:61.7px;text-align:center;font-size:9.5px;color:#6f5b9b">21.23%</div>
<div class="a" style="left:0;top:470.40px;width:488px;height:21.40px;background:#fff;border-bottom:1px solid #e2e2e2"></div>
<div style="position:absolute;left:15.7px;top:476.09999999999997px;width:7px;height:7px;border:1.3px solid #5a5a5a;border-radius:1px;background:#fff"></div>
<div class="t" style="left:46.8px;top:475.16px;font-size:9.5px;color:#3a73c9;">bizards-73</div>
<div class="a" style="left:196px;top:471.50px;width:45px;height:17px;border:1px solid #f5841f;border-radius:9.5px;background:#fdf1e6"></div>
<div class="a" style="left:198.2px;top:475.60px;width:10px;height:10px;border-radius:50%;background:#f5821f"></div>
<div class="t" style="left:211.6px;top:475.16px;font-size:9.5px;color:#222;">Major</div>
<div class="a" style="left:276px;top:472.30px;width:61.7px;height:17.4px;border-radius:2.5px;background:rgb(201,190,218)"></div>
<div class="t" style="left:276px;top:475.16px;width:61.7px;text-align:center;font-size:9.5px;color:#6f5b9b">39.27%</div>
<div class="a" style="left:350px;top:472.30px;width:61.7px;height:17.4px;border-radius:2.5px;background:rgb(143,120,178)"></div>
<div class="t" style="left:350px;top:475.16px;width:61.7px;text-align:center;font-size:9.5px;color:#fff;-webkit-text-stroke:0.25px #fff">81.53%</div>
<div class="a" style="left:425px;top:472.30px;width:61.7px;height:17.4px;border-radius:2.5px;background:rgb(217,209,229)"></div>
<div class="t" style="left:425px;top:475.16px;width:61.7px;text-align:center;font-size:9.5px;color:#6f5b9b">27.76%</div>
<div class="a" style="left:0;top:492.80px;width:488px;height:21.40px;background:#f4f4f4;border-bottom:1px solid #e2e2e2"></div>
<div style="position:absolute;left:15.7px;top:498.49999999999994px;width:7px;height:7px;border:1.3px solid #5a5a5a;border-radius:1px;background:#fff"></div>
<div class="t" style="left:46.8px;top:497.56px;font-size:9.5px;color:#3a73c9;">MOSS-CU-3-57</div>
<div class="a" style="left:196px;top:493.90px;width:45px;height:17px;border:1px solid #f5841f;border-radius:9.5px;background:#fdf1e6"></div>
<div class="a" style="left:198.2px;top:498.00px;width:10px;height:10px;border-radius:50%;background:#f5821f"></div>
<div class="t" style="left:211.6px;top:497.56px;font-size:9.5px;color:#222;">Major</div>
<div class="a" style="left:276px;top:494.70px;width:61.7px;height:17.4px;border-radius:2.5px;background:rgb(198,187,216)"></div>
<div class="t" style="left:276px;top:497.56px;width:61.7px;text-align:center;font-size:9.5px;color:#6f5b9b">41.3%</div>
<div class="a" style="left:350px;top:494.70px;width:61.7px;height:17.4px;border-radius:2.5px;background:rgb(151,129,183)"></div>
<div class="t" style="left:350px;top:497.56px;width:61.7px;text-align:center;font-size:9.5px;color:#fff;-webkit-text-stroke:0.25px #fff">76.26%</div>
<div class="a" style="left:425px;top:494.70px;width:61.7px;height:17.4px;border-radius:2.5px;background:rgb(218,211,230)"></div>
<div class="t" style="left:425px;top:497.56px;width:61.7px;text-align:center;font-size:9.5px;color:#6f5b9b">26.69%</div>
</div>
<div class="a" style="left:554px;top:210px;width:15px;height:507px;background:#f4f4f4"></div>
<svg class="a" style="left:555.5px;top:214px" width="10" height="8" viewBox="0 0 10 8"><path d="M5 1 L9.5 7.5 H0.5 Z" fill="#ddd"/></svg>
<div class="a" style="left:556px;top:228px;width:9px;height:332px;background:#dcdcdc;border-radius:5px"></div>
<svg class="a" style="left:555.5px;top:705px" width="10" height="8" viewBox="0 0 10 8"><path d="M0.5 0.5 H9.5 L5 7 Z" fill="#ddd"/></svg>
<div class="t" style="left:484.7px;top:731.53px;font-size:10.95px;color:#222;">1 row selected</div>
<div class="a" style="left:65px;top:760px;width:505px;height:64px;background:#f4f4f4;border-radius:2px"></div>
<div class="t" style="left:71.7px;top:787.06px;font-size:8.2px;color:#222;font-weight:bold;">Low</div>
<div class="a" style="left:100px;top:786px;width:432px;height:10px;background:linear-gradient(to right,#fff,rgb(118, 90, 160))"></div>
<div class="t" style="left:545.5px;top:787.06px;font-size:8.2px;color:#222;font-weight:bold;">High</div>
<div class="card" style="left:587px;top:99px;width:522px;height:364px"></div>
<div class="t" style="left:596.3px;top:114.64px;font-size:13.3px;color:#222;">CPU Usage</div>
<div class="a" style="left:1038px;top:116px"><svg width="14" height="14" viewBox="0 0 14 14"><path d="M0.3 0.4 H12.7 L7.8 6.8 V12.7 H5.2 V6.8 Z" fill="#737373"/></svg></div>
<div class="a" style="left:1080px;top:116px"><svg width="16" height="15" viewBox="0 0 16 15" style="display:block"><rect x="0" y="0" width="6.2" height="3.5" rx="0.9" fill="#555"/><rect x="9" y="0" width="6.2" height="3.5" rx="0.9" fill="#555"/><rect x="0" y="5" width="6.2" height="3.5" rx="0.9" fill="#555"/><rect x="9.55" y="5.55" width="5.1" height="2.4" rx="0.6" fill="#fff" stroke="#555" stroke-width="1.1"/><rect x="0.55" y="10.75" width="5.1" height="2.4" rx="0.6" fill="#fff" stroke="#555" stroke-width="1.1"/><rect x="9.55" y="10.75" width="5.1" height="2.4" rx="0.6" fill="#fff" stroke="#555" stroke-width="1.1"/></svg></div>
<div class="a" style="left:652px;top:161px;width:440px;height:1px;background:#e6e6e6"></div>
<div class="t" style="left:610px;top:157.81px;width:30px;text-align:right;font-size:9.6px;color:#333">100</div>
<div class="a" style="left:652px;top:217px;width:440px;height:1px;background:#e6e6e6"></div>
<div class="t" style="left:610px;top:213.81px;width:30px;text-align:right;font-size:9.6px;color:#333">75</div>
<div class="a" style="left:652px;top:273px;width:440px;height:1px;background:#e6e6e6"></div>
<div class="t" style="left:610px;top:269.81px;width:30px;text-align:right;font-size:9.6px;color:#333">50</div>
<div class="a" style="left:652px;top:329px;width:440px;height:1px;background:#e6e6e6"></div>
<div class="t" style="left:610px;top:325.81px;width:30px;text-align:right;font-size:9.6px;color:#333">25</div>
<div class="a" style="left:652px;top:386px;width:440px;height:1px;background:#d9d9d9"></div>
<div class="t" style="left:610px;top:382.81px;width:30px;text-align:right;font-size:9.6px;color:#333">0</div>
<div class="t" style="left:605.5px;top:268.8px;width:10px;height:10px;line-height:10px;text-align:center;font-size:9.5px;color:#333;transform:rotate(90deg)">%</div>
<div class="a" style="left:659px;top:386px;width:1px;height:8px;background:#dcdcdc"></div>
<div class="t" style="left:639.8px;top:398.94px;width:41px;text-align:center;font-size:10px;color:#333">06:00</div>
<div class="a" style="left:733px;top:386px;width:1px;height:8px;background:#dcdcdc"></div>
<div class="t" style="left:713.3px;top:398.94px;width:41px;text-align:center;font-size:10px;color:#333">07:00</div>
<div class="a" style="left:806px;top:386px;width:1px;height:8px;background:#dcdcdc"></div>
<div class="t" style="left:786.8px;top:398.94px;width:41px;text-align:center;font-size:10px;color:#333">08:00</div>
<div class="a" style="left:880px;top:386px;width:1px;height:8px;background:#dcdcdc"></div>
<div class="t" style="left:860.2px;top:398.94px;width:41px;text-align:center;font-size:10px;color:#333">09:00</div>
<div class="a" style="left:953px;top:386px;width:1px;height:8px;background:#dcdcdc"></div>
<div class="t" style="left:933.7px;top:398.94px;width:41px;text-align:center;font-size:10px;color:#333">10:00</div>
<div class="a" style="left:1027px;top:386px;width:1px;height:8px;background:#dcdcdc"></div>
<div class="t" style="left:1007.2px;top:398.94px;width:41px;text-align:center;font-size:10px;color:#333">11:00</div>
<div class="a" style="left:612.8px;top:426px;width:8px;height:8px;border-radius:50%;background:#7651a8"></div>
<div class="t" style="left:627px;top:426.80px;font-size:7.8px;color:#333;">sous-aio-90: CPU</div>
<svg class="a" style="left:587px;top:99px" width="522" height="364"><polyline points="66.5,245.6 72.7,241.1 78.9,235.5 85.1,250.5 91.4,243.8 97.3,246.6 103.1,248.4 109.4,242.9 115.6,245.9 121.8,248.7 128.0,243.1 134.3,245.6 139.8,246.2 146.0,242.4 152.3,241.5 158.5,248.7 164.7,243.8 171.0,246.3 176.5,247.0 182.7,245.9 188.9,245.9 195.2,252.6 201.4,247.3 207.3,242.7 213.8,248.0 219.4,248.0 225.6,237.6 231.8,248.7 238.1,243.8 243.6,244.5 249.8,247.7 256.0,245.2 262.3,243.6 268.5,250.5 274.7,243.4 281.0,245.9 287.2,247.3 292.7,242.5 298.9,237.9 304.9,247.5 311.2,243.2 316.9,244.8 323.5,249.7 329.0,246.8 335.4,242.4 341.6,248.5 348.2,244.6 353.5,245.5 360.1,248.4 366.1,240.6 372.0,237.3 378.4,248.8 384.6,243.9 390.6,245.2 396.5,245.8 402.9,243.8 409.1,246.1 415.1,248.5 421.0,244.4 427.0,245.9 433.3,247.1 439.6,241.5 445.5,240.5 451.7,249.9 457.8,244.8 463.8,241.5 470.0,248.4 476.0,245.2 482.2,243.9 488.5,249.2 494.5,245.9 500.8,244.4" fill="none" stroke="#7b5ca8" stroke-width="1.3" stroke-linejoin="round"/></svg>
<div class="card" style="left:1117px;top:99px;width:523px;height:364px"></div>
<div class="t" style="left:1126.3px;top:114.64px;font-size:13.3px;color:#222;">Memory Usage</div>
<div class="a" style="left:1568px;top:116px"><svg width="14" height="14" viewBox="0 0 14 14"><path d="M0.3 0.4 H12.7 L7.8 6.8 V12.7 H5.2 V6.8 Z" fill="#737373"/></svg></div>
<div class="a" style="left:1610px;top:116px"><svg width="16" height="15" viewBox="0 0 16 15" style="display:block"><rect x="0" y="0" width="6.2" height="3.5" rx="0.9" fill="#555"/><rect x="9" y="0" width="6.2" height="3.5" rx="0.9" fill="#555"/><rect x="0" y="5" width="6.2" height="3.5" rx="0.9" fill="#555"/><rect x="9.55" y="5.55" width="5.1" height="2.4" rx="0.6" fill="#fff" stroke="#555" stroke-width="1.1"/><rect x="0.55" y="10.75" width="5.1" height="2.4" rx="0.6" fill="#fff" stroke="#555" stroke-width="1.1"/><rect x="9.55" y="10.75" width="5.1" height="2.4" rx="0.6" fill="#fff" stroke="#555" stroke-width="1.1"/></svg></div>
<div class="a" style="left:1182px;top:161px;width:440px;height:1px;background:#e6e6e6"></div>
<div class="t" style="left:1140px;top:157.81px;width:30px;text-align:right;font-size:9.6px;color:#333">100</div>
<div class="a" style="left:1182px;top:217px;width:440px;height:1px;background:#e6e6e6"></div>
<div class="t" style="left:1140px;top:213.81px;width:30px;text-align:right;font-size:9.6px;color:#333">75</div>
<div class="a" style="left:1182px;top:273px;width:440px;height:1px;background:#e6e6e6"></div>
<div class="t" style="left:1140px;top:269.81px;width:30px;text-align:right;font-size:9.6px;color:#333">50</div>
<div class="a" style="left:1182px;top:329px;width:440px;height:1px;background:#e6e6e6"></div>
<div class="t" style="left:1140px;top:325.81px;width:30px;text-align:right;font-size:9.6px;color:#333">25</div>
<div class="a" style="left:1182px;top:386px;width:440px;height:1px;background:#d9d9d9"></div>
<div class="t" style="left:1140px;top:382.81px;width:30px;text-align:right;font-size:9.6px;color:#333">0</div>
<div class="t" style="left:1135.5px;top:268.8px;width:10px;height:10px;line-height:10px;text-align:center;font-size:9.5px;color:#333;transform:rotate(90deg)">%</div>
<div class="a" style="left:1189px;top:386px;width:1px;height:8px;background:#dcdcdc"></div>
<div class="t" style="left:1169.8px;top:398.94px;width:41px;text-align:center;font-size:10px;color:#333">06:00</div>
<div class="a" style="left:1263px;top:386px;width:1px;height:8px;background:#dcdcdc"></div>
<div class="t" style="left:1243.3px;top:398.94px;width:41px;text-align:center;font-size:10px;color:#333">07:00</div>
<div class="a" style="left:1336px;top:386px;width:1px;height:8px;background:#dcdcdc"></div>
<div class="t" style="left:1316.8px;top:398.94px;width:41px;text-align:center;font-size:10px;color:#333">08:00</div>
<div class="a" style="left:1410px;top:386px;width:1px;height:8px;background:#dcdcdc"></div>
<div class="t" style="left:1390.2px;top:398.94px;width:41px;text-align:center;font-size:10px;color:#333">09:00</div>
<div class="a" style="left:1483px;top:386px;width:1px;height:8px;background:#dcdcdc"></div>
<div class="t" style="left:1463.7px;top:398.94px;width:41px;text-align:center;font-size:10px;color:#333">10:00</div>
<div class="a" style="left:1557px;top:386px;width:1px;height:8px;background:#dcdcdc"></div>
<div class="t" style="left:1537.2px;top:398.94px;width:41px;text-align:center;font-size:10px;color:#333">11:00</div>
<div class="a" style="left:1142.8px;top:426px;width:8px;height:8px;border-radius:50%;background:#7651a8"></div>
<div class="t" style="left:1157px;top:426.80px;font-size:7.8px;color:#333;">sous-aio-90: Memory</div>
<svg class="a" style="left:1117px;top:99px" width="522" height="364"><polyline points="66.3,114.8 72.9,106.0 78.9,127.1 85.2,119.5 91.5,117.1 97.4,114.8 103.4,115.8 109.3,109.5 115.5,118.1 121.6,109.3 127.9,115.5 134.1,111.8 140.2,117.2 146.1,108.6 152.3,119.2 158.3,110.9 164.5,115.2 170.5,110.2 176.6,115.2 182.8,102.3 189.0,116.5 195.1,109.8 201.3,112.6 207.3,107.8 213.5,109.8 219.6,104.2 225.8,114.2 231.8,111.5 237.7,111.8 243.7,113.8 250.0,124.1 256.2,107.1 262.2,113.2 268.4,107.5 274.4,109.3 280.3,107.6 286.6,118.4 293.0,103.2 299.0,113.6 305.3,109.7 311.2,109.0 317.4,104.6 323.7,112.2 329.6,101.4 335.8,110.4 341.7,108.6 347.9,110.7 354.1,109.3 360.1,115.9 366.3,100.4 372.5,113.4 378.3,111.5 384.6,113.8 390.5,109.4 396.7,117.3 403.0,110.8 409.2,113.6 415.0,111.8 421.2,115.2 427.5,110.0 433.7,115.9 439.6,106.2 445.9,122.4 452.1,114.8 457.9,112.0 464.1,113.1 470.4,118.4 476.3,104.1 482.5,116.3 488.8,108.0 494.9,111.3 500.8,108.7" fill="none" stroke="#7b5ca8" stroke-width="1.3" stroke-linejoin="round"/></svg>
<div class="card" style="left:1117px;top:471px;width:523px;height:363px"></div>
<div class="t" style="left:1126.3px;top:486.64px;font-size:13.3px;color:#222;">File System Usage</div>
<div class="a" style="left:1568px;top:488px"><svg width="14" height="14" viewBox="0 0 14 14"><path d="M0.3 0.4 H12.7 L7.8 6.8 V12.7 H5.2 V6.8 Z" fill="#737373"/></svg></div>
<div class="a" style="left:1610px;top:488px"><svg width="16" height="15" viewBox="0 0 16 15" style="display:block"><rect x="0" y="0" width="6.2" height="3.5" rx="0.9" fill="#555"/><rect x="9" y="0" width="6.2" height="3.5" rx="0.9" fill="#555"/><rect x="0" y="5" width="6.2" height="3.5" rx="0.9" fill="#555"/><rect x="9.55" y="5.55" width="5.1" height="2.4" rx="0.6" fill="#fff" stroke="#555" stroke-width="1.1"/><rect x="0.55" y="10.75" width="5.1" height="2.4" rx="0.6" fill="#fff" stroke="#555" stroke-width="1.1"/><rect x="9.55" y="10.75" width="5.1" height="2.4" rx="0.6" fill="#fff" stroke="#555" stroke-width="1.1"/></svg></div>
<div class="a" style="left:1182px;top:533px;width:440px;height:1px;background:#e6e6e6"></div>
<div class="t" style="left:1140px;top:529.81px;width:30px;text-align:right;font-size:9.6px;color:#333">100</div>
<div class="a" style="left:1182px;top:589px;width:440px;height:1px;background:#e6e6e6"></div>
<div class="t" style="left:1140px;top:585.81px;width:30px;text-align:right;font-size:9.6px;color:#333">75</div>
<div class="a" style="left:1182px;top:645px;width:440px;height:1px;background:#e6e6e6"></div>
<div class="t" style="left:1140px;top:641.81px;width:30px;text-align:right;font-size:9.6px;color:#333">50</div>
<div class="a" style="left:1182px;top:701px;width:440px;height:1px;background:#e6e6e6"></div>
<div class="t" style="left:1140px;top:697.81px;width:30px;text-align:right;font-size:9.6px;color:#333">25</div>
<div class="a" style="left:1182px;top:758px;width:440px;height:1px;background:#d9d9d9"></div>
<div class="t" style="left:1140px;top:754.81px;width:30px;text-align:right;font-size:9.6px;color:#333">0</div>
<div class="t" style="left:1135.5px;top:640.8px;width:10px;height:10px;line-height:10px;text-align:center;font-size:9.5px;color:#333;transform:rotate(90deg)">%</div>
<div class="a" style="left:1189px;top:758px;width:1px;height:8px;background:#dcdcdc"></div>
<div class="t" style="left:1169.8px;top:770.93px;width:41px;text-align:center;font-size:10px;color:#333">06:00</div>
<div class="a" style="left:1263px;top:758px;width:1px;height:8px;background:#dcdcdc"></div>
<div class="t" style="left:1243.3px;top:770.93px;width:41px;text-align:center;font-size:10px;color:#333">07:00</div>
<div class="a" style="left:1336px;top:758px;width:1px;height:8px;background:#dcdcdc"></div>
<div class="t" style="left:1316.8px;top:770.93px;width:41px;text-align:center;font-size:10px;color:#333">08:00</div>
<div class="a" style="left:1410px;top:758px;width:1px;height:8px;background:#dcdcdc"></div>
<div class="t" style="left:1390.2px;top:770.93px;width:41px;text-align:center;font-size:10px;color:#333">09:00</div>
<div class="a" style="left:1483px;top:758px;width:1px;height:8px;background:#dcdcdc"></div>
<div class="t" style="left:1463.7px;top:770.93px;width:41px;text-align:center;font-size:10px;color:#333">10:00</div>
<div class="a" style="left:1557px;top:758px;width:1px;height:8px;background:#dcdcdc"></div>
<div class="t" style="left:1537.2px;top:770.93px;width:41px;text-align:center;font-size:10px;color:#333">11:00</div>
<div class="a" style="left:1142.8px;top:798px;width:8px;height:8px;border-radius:50%;background:#7651a8"></div>
<div class="t" style="left:1157px;top:798.80px;font-size:7.8px;color:#333;">sous-aio-90 (/): FS Utilization</div>
<svg class="a" style="left:1117px;top:471px" width="522" height="364"><line x1="72.2" y1="185" x2="495.5" y2="185" stroke="#7b5ca8" stroke-width="1.3"/></svg>
<div class="card" style="left:587px;top:471px;width:522px;height:363px"></div>
<div class="t" style="left:596.5px;top:486.47px;font-size:13.5px;color:#222;">File Systems</div>
<div class="a" style="left:1038px;top:488px"><svg width="14" height="14" viewBox="0 0 14 14"><path d="M0.3 0.4 H12.7 L7.8 6.8 V12.7 H5.2 V6.8 Z" fill="#737373"/></svg></div>
<div class="a" style="left:1080px;top:488px"><svg width="16" height="15" viewBox="0 0 16 15" style="display:block"><rect x="0" y="0" width="6.2" height="3.5" rx="0.9" fill="#555"/><rect x="9" y="0" width="6.2" height="3.5" rx="0.9" fill="#555"/><rect x="0" y="5" width="6.2" height="3.5" rx="0.9" fill="#555"/><rect x="9.55" y="5.55" width="5.1" height="2.4" rx="0.6" fill="#fff" stroke="#555" stroke-width="1.1"/><rect x="0.55" y="10.75" width="5.1" height="2.4" rx="0.6" fill="#fff" stroke="#555" stroke-width="1.1"/><rect x="9.55" y="10.75" width="5.1" height="2.4" rx="0.6" fill="#fff" stroke="#555" stroke-width="1.1"/></svg></div>
<div class="a" style="left:597px;top:525px;width:501px;height:298px;border:1px solid #f7f7f7;background:#fff"></div>
<div style="position:absolute;left:611.6px;top:531.6px;width:9.5px;height:9.5px;background:#3b6fd4;border-radius:1.2px"><div style="position:absolute;left:2.3px;top:4.1px;width:5px;height:1.4px;background:#fff"></div></div>
<div class="a" style="left:636.5px;top:530px;width:1px;height:12px;background:#ddd"></div>
<div class="a" style="left:790.5px;top:530px;width:1px;height:12px;background:#ddd"></div>
<div class="a" style="left:944.5px;top:530px;width:1px;height:12px;background:#ddd"></div>
<div class="a" style="left:1098px;top:530px;width:1px;height:12px;background:#ddd"></div>
<div class="t" style="left:643.5px;top:530.86px;font-size:9.5px;color:#222;-webkit-text-stroke:0.35px #222">Device Name</div>
<div class="t" style="left:797.5px;top:530.86px;font-size:9.5px;color:#222;-webkit-text-stroke:0.35px #222">Index</div>
<div class="t" style="left:951.8px;top:530.86px;font-size:9.5px;color:#222;-webkit-text-stroke:0.35px #222">Volume</div>
<div class="a" style="left:598px;top:549px;width:501px;height:1px;background:#e2e2e2"></div>
<div class="a" style="left:598px;top:550.00px;width:501px;height:21.4px;background:#eef2fa;border-bottom:1px solid #e2e2e2"></div>
<div style="position:absolute;left:611.6px;top:555.5px;width:9.5px;height:9.5px;background:#3b6fd4;border-radius:1.2px"><svg width="10" height="10" viewBox="0 0 10 10" style="position:absolute;left:0;top:0"><path d="M1.8 5 L3.9 7 L8 2.6" stroke="#fff" stroke-width="1.4" fill="none"/></svg></div>
<div class="t" style="left:643.8px;top:555.96px;font-size:9.5px;color:#3a73c9;">sous-aio-90</div>
<div class="t" style="left:797.5px;top:555.20px;font-size:9.8px;color:#333;">401</div>
<div class="t" style="left:951.8px;top:555.20px;font-size:9.8px;color:#333;">/</div>
<div class="a" style="left:598px;top:572.40px;width:501px;height:21.4px;background:#fff;border-bottom:1px solid #e2e2e2"></div>
<div style="position:absolute;left:611.6px;top:577.9px;width:7px;height:7px;border:1.3px solid #5a5a5a;border-radius:1px;background:#fff"></div>
<div class="t" style="left:643.8px;top:578.36px;font-size:9.5px;color:#3a73c9;">sous-aio-90</div>
<div class="t" style="left:797.5px;top:577.60px;font-size:9.8px;color:#333;">402</div>
<div class="t" style="left:951.8px;top:577.60px;font-size:9.8px;color:#333;">/var</div>
<div class="a" style="left:598px;top:594.80px;width:501px;height:21.4px;background:#f4f4f4;border-bottom:1px solid #e2e2e2"></div>
<div style="position:absolute;left:611.6px;top:600.3px;width:7px;height:7px;border:1.3px solid #5a5a5a;border-radius:1px;background:#fff"></div>
<div class="t" style="left:643.8px;top:600.76px;font-size:9.5px;color:#3a73c9;">sous-aio-90</div>
<div class="t" style="left:797.5px;top:600.00px;font-size:9.8px;color:#333;">403</div>
<div class="t" style="left:951.8px;top:600.00px;font-size:9.8px;color:#333;">/var/lib</div>
<div class="a" style="left:598px;top:617.20px;width:501px;height:21.4px;background:#fff;border-bottom:1px solid #e2e2e2"></div>
<div style="position:absolute;left:611.6px;top:622.7px;width:7px;height:7px;border:1.3px solid #5a5a5a;border-radius:1px;background:#fff"></div>
<div class="t" style="left:643.8px;top:623.16px;font-size:9.5px;color:#3a73c9;">sous-aio-90</div>
<div class="t" style="left:797.5px;top:622.40px;font-size:9.8px;color:#333;">404</div>
<div class="t" style="left:951.8px;top:622.40px;font-size:9.8px;color:#333;">/var/log</div>
<div class="a" style="left:598px;top:639.60px;width:501px;height:21.4px;background:#f4f4f4;border-bottom:1px solid #e2e2e2"></div>
<div style="position:absolute;left:611.6px;top:645.1px;width:7px;height:7px;border:1.3px solid #5a5a5a;border-radius:1px;background:#fff"></div>
<div class="t" style="left:643.8px;top:645.56px;font-size:9.5px;color:#3a73c9;">sous-aio-90</div>
<div class="t" style="left:797.5px;top:644.80px;font-size:9.8px;color:#333;">405</div>
<div class="t" style="left:951.8px;top:644.80px;font-size:9.8px;color:#333;">/var/log/audit</div>
<div class="a" style="left:598px;top:662.00px;width:501px;height:21.4px;background:#fff;border-bottom:1px solid #e2e2e2"></div>
<div style="position:absolute;left:611.6px;top:667.5px;width:7px;height:7px;border:1.3px solid #5a5a5a;border-radius:1px;background:#fff"></div>
<div class="t" style="left:643.8px;top:667.96px;font-size:9.5px;color:#3a73c9;">sous-aio-90</div>
<div class="t" style="left:797.5px;top:667.20px;font-size:9.8px;color:#333;">406</div>
<div class="t" style="left:951.8px;top:667.20px;font-size:9.8px;color:#333;">/var/tmp</div>
<div class="a" style="left:598px;top:684.40px;width:501px;height:21.4px;background:#f4f4f4;border-bottom:1px solid #e2e2e2"></div>
<div style="position:absolute;left:611.6px;top:689.9px;width:7px;height:7px;border:1.3px solid #5a5a5a;border-radius:1px;background:#fff"></div>
<div class="t" style="left:643.8px;top:690.36px;font-size:9.5px;color:#3a73c9;">sous-aio-90</div>
<div class="t" style="left:797.5px;top:689.60px;font-size:9.8px;color:#333;">407</div>
<div class="t" style="left:951.8px;top:689.60px;font-size:9.8px;color:#333;">/home</div>
<div class="a" style="left:598px;top:706.80px;width:501px;height:21.4px;background:#fff;border-bottom:1px solid #e2e2e2"></div>
<div style="position:absolute;left:611.6px;top:712.3px;width:7px;height:7px;border:1.3px solid #5a5a5a;border-radius:1px;background:#fff"></div>
<div class="t" style="left:643.8px;top:712.76px;font-size:9.5px;color:#3a73c9;">sous-aio-90</div>
<div class="t" style="left:797.5px;top:712.00px;font-size:9.8px;color:#333;">408</div>
<div class="t" style="left:951.8px;top:712.00px;font-size:9.8px;color:#333;">/tmp</div>
<div class="a" style="left:598px;top:729.20px;width:501px;height:21.4px;background:#f4f4f4;border-bottom:1px solid #e2e2e2"></div>
<div style="position:absolute;left:611.6px;top:734.7px;width:7px;height:7px;border:1.3px solid #5a5a5a;border-radius:1px;background:#fff"></div>
<div class="t" style="left:643.8px;top:735.16px;font-size:9.5px;color:#3a73c9;">sous-aio-90</div>
<div class="t" style="left:797.5px;top:734.40px;font-size:9.8px;color:#333;">409</div>
<div class="t" style="left:951.8px;top:734.40px;font-size:9.8px;color:#333;">/data.local/db</div>
</body></html>
